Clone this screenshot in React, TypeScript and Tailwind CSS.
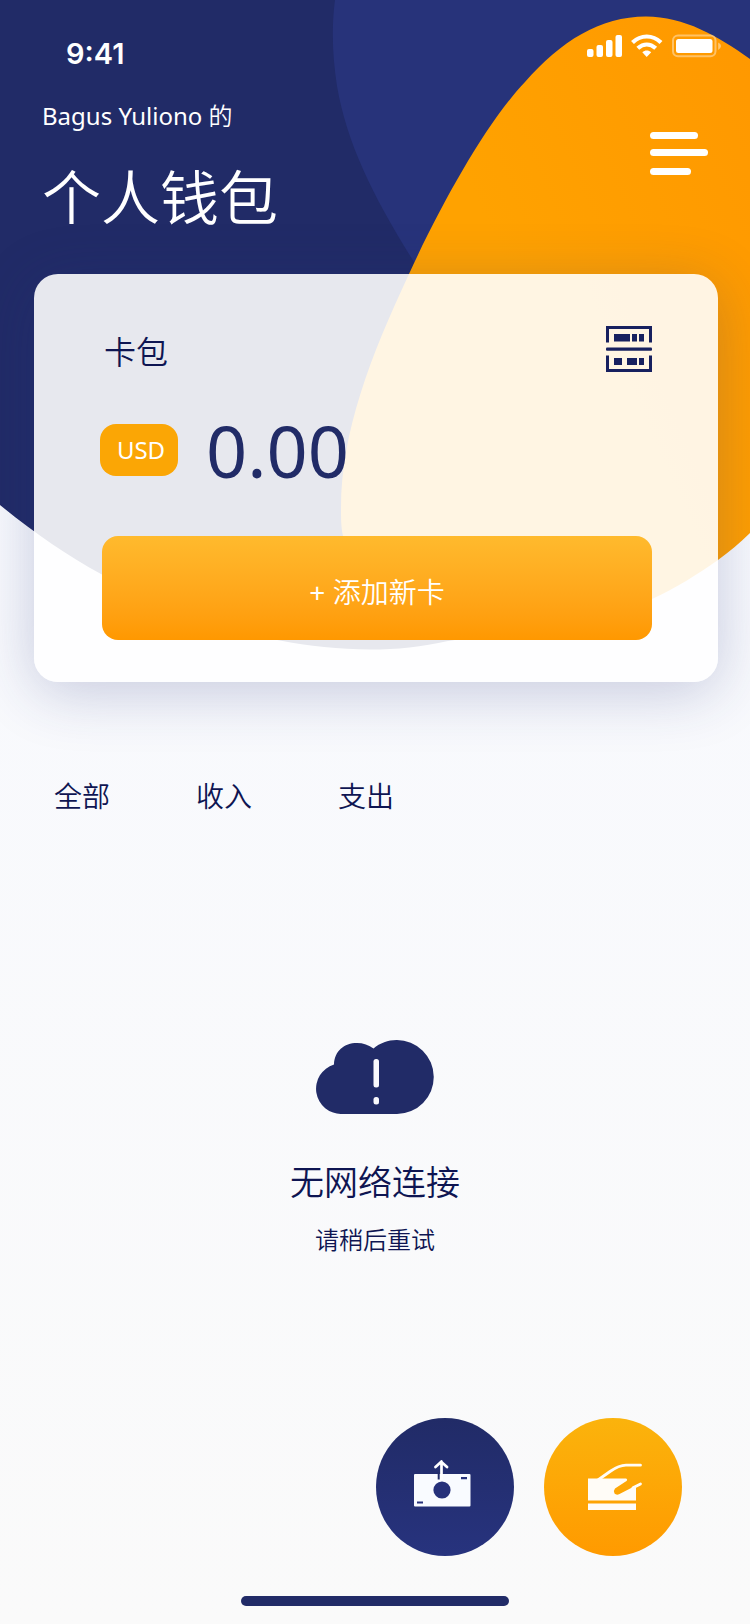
import React from "react";

const sans = "font-['Noto_Sans','Noto_Sans_CJK_SC',sans-serif]";

function Backdrop() {
  return (
    <svg
      className="absolute inset-x-0 top-0 h-[650px] w-full"
      viewBox="0 0 750 650"
      preserveAspectRatio="none"
      aria-hidden="true"
    >
      <defs>
        <linearGradient id="amber" x1="0.4" y1="0.4" x2="1" y2="0">
          <stop offset="0" stopColor="#ffa200" />
          <stop offset="1" stopColor="#ff9800" />
        </linearGradient>
        <clipPath id="base">
          <path d="M0 0H750V500C700 560 570 626 448 641C422 647 397 649.500 370 649.500C340 649.500 308 646 280 640.500C215 630 155 605 101 574C66 555 33 532 0 505Z" />
        </clipPath>
      </defs>
      <g clipPath="url(#base)">
        <rect width="750" height="650" fill="#212b67" />
        <path d="M335 0C331 30 333 60 337 86C347 145 375 200 414 262L750 300V0Z" fill="#27337a" />
      </g>
      <path
        d="M646 16.500C684 16.500 718 36 750 59V533C740 543 729 552 718 560C698 574 676 588 652 599C600 627 540 650 480 630C400 610 346 580 343 536C341 527 341 519 341 508C341 432 371 355 409 274C442 202 487 122 525 82C561 41 600 16.500 646 16.500Z"
        fill="url(#amber)"
      />
    </svg>
  );
}

function StatusIcons() {
  return (
    <svg className="h-6 w-[136px]" viewBox="587 34 136 24" fill="#fff" aria-hidden="true">
      <rect x="587" y="49" width="6.500" height="8" rx="2" />
      <rect x="596.500" y="45" width="6.500" height="12" rx="2" />
      <rect x="606" y="40" width="6.500" height="17" rx="2" />
      <rect x="615.500" y="35" width="6.500" height="22" rx="2" />
      <g fill="none" stroke="#fff" strokeWidth="4.200">
        <path d="M632.500 42.500C641 34.500 652.500 34.500 661 42.500" />
        <path d="M637.800 48.300C643.500 43.200 650 43.200 655.700 48.300" />
      </g>
      <path d="M642.300 52.300C645 49.800 648.500 49.800 651.200 52.300L646.700 57Z" />
      <rect x="673" y="35.500" width="42.500" height="20.800" rx="5" fill="none" stroke="#fff" strokeOpacity=".4" strokeWidth="2" />
      <rect x="676" y="39" width="36.500" height="14" rx="2.500" />
      <path d="M718.200 42.500Q721 43.800 721 46T718.200 50Z" fillOpacity=".45" />
    </svg>
  );
}

function ScanIcon() {
  return (
    <svg className="size-[46px]" viewBox="0 0 46 46" fill="#17205f" aria-hidden="true">
      <path d="M0 16.500V0H46V16.500H43V3H3V16.500Z" />
      <path d="M0 29.500V46H46V29.500H43V43H3V29.500Z" />
      <rect y="21.500" width="46" height="3.200" rx="1" />
      <path d="M8 8H24V15.500H8ZM26 8H31V15.500H26ZM33 8H38V15.500H33ZM8 32H16V39H8ZM21 32H31V39H21ZM33 32H38V39H33Z" />
    </svg>
  );
}

function CloudIcon() {
  return (
    <svg className="h-[74px] w-[118px]" viewBox="0 0 118 74" aria-hidden="true">
      <path
        d="M26 74A25.300 25.300 0 0 1 18 24.500C18.500 11 28 3 41 3C47 3 53 5 57.500 8.500C64 3 72 0 80.500 0A37 37 0 0 1 81 74Z"
        fill="#212b67"
      />
      <rect x="57.500" y="19" width="5.500" height="28.500" rx="2.500" fill="#f9f9fd" />
      <rect x="57.500" y="57" width="5.500" height="7.500" rx="2.500" fill="#f9f9fd" />
    </svg>
  );
}

function CashOutIcon() {
  return (
    <svg className="h-[48px] w-[58px]" viewBox="0 0 58 48" aria-hidden="true">
      <rect x="1" y="14" width="56.500" height="32.500" rx="1" fill="#f9fbff" />
      <circle cx="29" cy="30" r="8.600" fill="#26317a" />
      <path d="M25.700 12V19.500" stroke="#212b67" strokeWidth="2" />
      <path d="M28.500 19V1.500M22.500 7L28.200 1.800L34 7" fill="none" stroke="#fff" strokeWidth="2.700" strokeLinecap="round" />
      <path d="M48 18.200H54M4 42.500H10" stroke="#26317a" strokeWidth="2.200" />
    </svg>
  );
}

function CardSwipeIcon() {
  return (
    <svg className="h-[48px] w-[56px]" viewBox="0 0 56 48" aria-hidden="true">
      <path
        d="M0 15.500H38Q40 16.500 38.500 18L27 25.500Q25 28 26.500 30.500Q28.500 32.500 31.500 31L48 22.500V37.500H0Z"
        fill="#fffcf7"
      />
      <rect y="40.500" width="48" height="6.500" fill="#fffcf7" />
      <path d="M10 17L22 8.500Q31 2.200 38 2.200H52.500M45 24.800L52.500 21" fill="none" stroke="#fffcf7" strokeWidth="2.800" strokeLinecap="round" />
    </svg>
  );
}

export default function App() {
  return (
    <div className={`relative flex min-h-screen flex-col overflow-hidden bg-gradient-to-b from-[#f7f9ff] to-[#fafafa] text-[#0e1552] ${sans}`}>
      <Backdrop />

      <div className="relative flex h-[84px] items-start justify-between pr-[27px] pl-[66px] text-white">
        <time className="pt-9 font-['Inter',sans-serif] text-[29px] leading-9 font-semibold">9:41</time>
        <div className="pt-[34px]">
          <StatusIcons />
        </div>
      </div>

      <header className="relative flex items-start justify-between px-[42px] text-white">
        <div className="pt-[14px]">
          <p className="text-[24px] leading-9">
            Bagus Yuliono <span className="font-[350]">的</span>
          </p>
          <h1 className="mt-[27px] text-[59px] leading-[72px] font-[350]">个人钱包</h1>
        </div>
        <button type="button" aria-label="菜单" className="mt-12 flex w-[58px] flex-col">
          <span className="h-[7px] w-12 rounded-full bg-white" />
          <span className="mt-[10px] h-[7px] w-full rounded-full bg-white" />
          <span className="mt-3 h-[7px] w-[41px] rounded-full bg-white" />
        </button>
      </header>

      <section className="relative mt-[41px] mr-8 ml-[34px] rounded-[24px] bg-white/89 pt-[52px] pr-[66px] pb-[42px] pl-[68px] shadow-[0_10px_60px_rgba(39,51,122,0.24)]">
        <div className="flex items-end justify-between">
          <h2 className="pl-0.5 text-[32px] leading-10 font-[350]">卡包</h2>
          <button type="button" aria-label="扫描">
            <ScanIcon />
          </button>
        </div>
        <div className="mt-[52px] flex items-center gap-7">
          <span className="-ml-0.5 flex h-[52px] w-[78px] items-center justify-center rounded-2xl bg-[#fba605] pl-1 text-[24px] text-white">
            USD
          </span>
          <span className="text-[72px] leading-[52px] text-[#212b67]">0.00</span>
        </div>
        <button
          type="button"
          className="mt-[60px] h-[104px] w-full rounded-2xl bg-gradient-to-b from-[#ffba2d] to-[#ff9800] pt-2 text-[28px] font-[350] text-white"
        >
          <span className="font-normal">+</span> 添加新卡
        </button>
      </section>

      <nav className="relative mt-24 flex gap-[86px] px-[54px] text-[28px] leading-9 font-[350]">
        <button type="button">全部</button>
        <button type="button">收入</button>
        <button type="button">支出</button>
      </nav>

      <main className="mt-[226px] flex flex-col items-center">
        <CloudIcon />
        <h2 className="mt-11 text-[34px] leading-[48px] font-[350]">无网络连接</h2>
        <p className="mt-4 text-[24px] leading-9 font-[350]">请稍后重试</p>
      </main>

      <footer className="mt-auto flex flex-col pt-10 pb-[18px]">
        <div className="flex justify-end gap-[30px] pr-[68px]">
          <button
            type="button"
            aria-label="转出"
            className="flex size-[138px] items-center justify-center rounded-full bg-gradient-to-b from-[#212b67] to-[#27337e] pr-1.5 pb-1.5"
          >
            <CashOutIcon />
          </button>
          <button
            type="button"
            aria-label="刷卡"
            className="flex size-[138px] items-center justify-center rounded-full bg-gradient-to-b from-[#fbb30c] to-[#ff9a00] pl-1.5"
          >
            <CardSwipeIcon />
          </button>
        </div>
        <div className="mt-10 h-[10px] w-[268px] self-center rounded-full bg-[#212b67]" />
      </footer>
    </div>
  );
}
